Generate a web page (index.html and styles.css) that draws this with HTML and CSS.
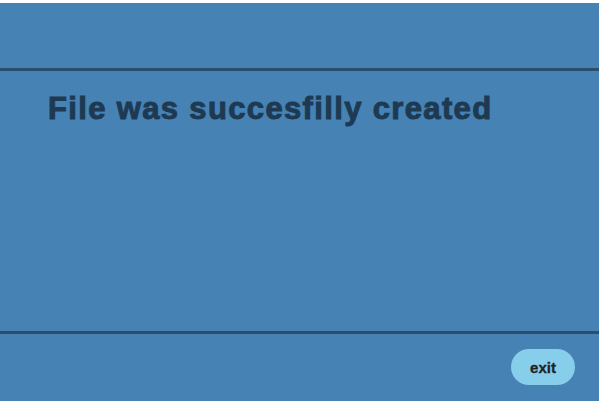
FILE: index.html
```html
<!DOCTYPE html>
<html lang="en">
<head>
<meta charset="utf-8">
<title>File created</title>
<link rel="stylesheet" href="styles.css">
</head>
<body>
<div class="app">
  <header class="top"></header>
  <main class="content">
    <h1 class="title">File was succesfilly created</h1>
  </main>
  <footer class="bottom">
    <button class="exit-btn" type="button">exit</button>
  </footer>
</div>
</body>
</html>
```

FILE: styles.css
```css
html, body {
  margin: 0;
  padding: 0;
  background: #ffffff;
  height: 100%;
}

body {
  padding-top: 3px;
  box-sizing: border-box;
  font-family: "Liberation Sans", Arial, sans-serif;
}

.app {
  display: flex;
  flex-direction: column;
  height: 398px;
  background: #4682b4;
}

.top {
  height: 68px;
  flex: none;
  box-sizing: border-box;
  border-bottom: 3px solid #2a4e6c;
}

.content {
  height: 263px;
  flex: none;
  box-sizing: border-box;
  border-bottom: 3px solid #2a4e6c;
  padding: 20px 0 0 48px;
}

.title {
  margin: 0;
  font-size: 31px;
  line-height: 36px;
  font-weight: bold;
  letter-spacing: 1.35px;
  -webkit-text-stroke: 1px #1e3a52;
  color: #1e3a52;
}

.bottom {
  flex: 1;
  display: flex;
  justify-content: flex-end;
  align-items: flex-start;
  padding: 15px 24px 0 0;
}

.exit-btn {
  width: 64px;
  height: 36px;
  border: none;
  border-radius: 18px;
  background: #87ceeb;
  color: #222222;
  font-family: "Liberation Sans", Arial, sans-serif;
  font-weight: bold;
  font-size: 15px;
  -webkit-text-stroke: 0.3px #222222;
  padding: 0;
  cursor: pointer;
}
```
